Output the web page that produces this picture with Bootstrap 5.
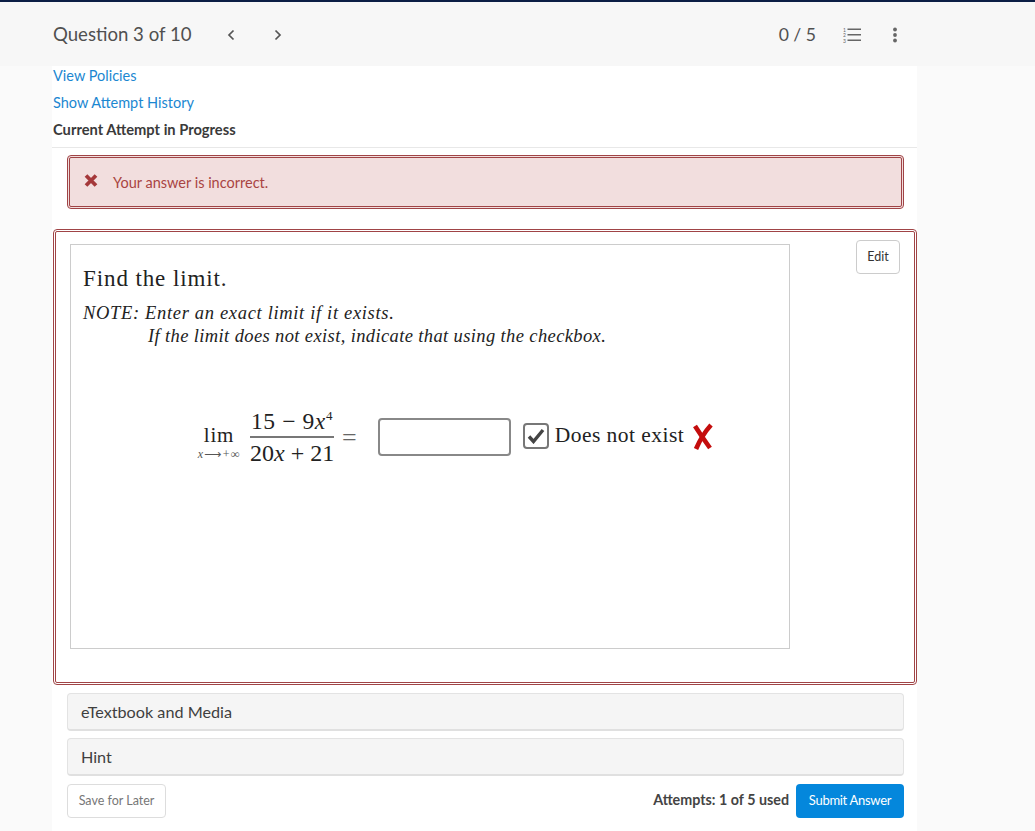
<!DOCTYPE html>
<html lang="en"><head><meta charset="utf-8"><title>Question 3 of 10</title>
<link rel="stylesheet" href="https://cdn.jsdelivr.net/npm/bootstrap@5.3.0/dist/css/bootstrap.min.css">
<style>
html,body{height:831px;overflow:hidden}
body{background:#fafafa;font-family:Lato,"Liberation Sans",sans-serif;color:#333;border-top:2px solid #0c1e45;font-size:14.5px}
.qhead{height:64px;background:#f7f7f7;padding:2px 137px 0 53px;color:#505050}
.qtitle{font-size:18.6px;width:173px}
.qscore{font-size:17.6px;margin-right:27px}
.qnav{margin-right:37px;line-height:0}
.qlist{margin-right:31px}
.qlist text{font:5px Lato,sans-serif;fill:#666}
.qmain{width:865px;margin-left:52px;background:#fff;height:765px}
.qlinks{padding:0 1px;height:82px;border-bottom:1px solid #e8e8e8}
.qlinks>*{height:27px;line-height:20px;display:block}
.qlinks a{color:#1b87d1;text-decoration:none}
.qlinks strong{color:#3a3a3a;font-weight:700;font-size:14.7px;line-height:19px}
.wrong-alert{margin:7px 13px 0 15px;height:54px;border:3px double #a04446;border-radius:4px;background:#f2dede;color:#a94442;padding-left:14px;gap:15px}
.wrong-alert svg{margin-bottom:4px}
.wrong-alert span{padding-top:2px}
.wrong-box{margin:20px 0 0 1px;height:456px;border:3px double #a04446;border-radius:4px;padding:12px 14px 0 14px;gap:66px}
.qfigure{width:720px;height:405px;flex-shrink:0;border:1px solid #ccc;padding:20px 12px 0 12px;font-family:"Liberation Serif",serif;color:#222}
.qfind{font-size:23px;letter-spacing:.9px;line-height:28px}
.qnote{font-size:18.5px;font-style:italic;letter-spacing:.67px;line-height:24px;margin-top:8px}
.qnote2{padding-left:65px;letter-spacing:.38px;margin-top:-1px}
.qmath{margin-top:61px;margin-left:107px;height:56px}
.qlim{width:58px;text-align:center;margin-top:11px}
.qlim b{font-weight:400;font-size:21px;line-height:20px;display:block;letter-spacing:.8px}
.qlim i{font-size:12px;line-height:12px;display:block;white-space:nowrap;margin-top:3px;font-family:"Liberation Serif","DejaVu Sans",serif;letter-spacing:.8px;color:#555}
.qfrac{width:84px;margin-left:2px;font-size:23.5px;line-height:30px;text-align:center;white-space:nowrap}
.qfrac>div:first-child{border-bottom:2px solid #777;height:32px;letter-spacing:.6px}
.qdenom{font-size:24px}
.qfrac sup{font-size:13px;top:-.7em}
.qeq{font-size:26px;margin:0 21px 0 8px;color:#666}
.qinput{width:133px;height:38px;border:2px solid #888;border-radius:4px;background:#fff}
.qcheck{width:26px;height:26px;border:2px solid #777;border-radius:4px;margin-left:12px;margin-bottom:2px;line-height:0}
.qdne{font-size:21.5px;letter-spacing:.47px;margin:0 8px 4px 6px;white-space:nowrap}
.edit-btn{height:34px;width:44px;padding:0;font-size:12.5px;color:#333;border:1px solid #ccc;border-radius:4px;background:#fff;margin-top:-4px;flex-shrink:0}
.qpanel{margin:8px 13px 0 15px;height:38px;background:#f5f5f5;border:1px solid #e3e3e3;border-bottom:2px solid #e0e0e0;border-radius:4px;padding:2px 0 0 13px;font-size:16.2px;color:#3f3f3f}
.qpanel+.qpanel{margin-top:7px}
.qfoot{margin:8px 13px 0 15px}
.save-btn{width:99px;height:34px;padding:0;font-size:12.5px;color:#777;background:#fff;border:1px solid #ddd;border-radius:4px}
.qused{font-size:14.3px;font-weight:700;color:#444;margin-right:7px;margin-bottom:2px}
.submit-btn{width:108px;height:34px;padding:0;font-size:13px;background:#0487dc;border:0;color:#fff;border-radius:4px;letter-spacing:-.3px}
</style></head>
<body>
<header class="qhead d-flex align-items-center">
  <div class="qtitle">Question 3 of 10</div>
  <div class="qnav"><svg width="10" height="14" viewBox="0 0 10 14" fill="none" stroke="#555" stroke-width="1.7"><path d="M7.5 2.5 3 7l4.5 4.5"/></svg></div>
  <div class="qnav"><svg width="10" height="14" viewBox="0 0 10 14" fill="none" stroke="#555" stroke-width="1.7"><path d="M2.5 2.5 7 7l-4.5 4.5"/></svg></div>
  <div class="ms-auto qscore">0 / 5</div>
  <svg class="qlist" width="18" height="16" viewBox="0 0 18 16" fill="#666"><rect x="4.5" y="1.5" width="13.5" height="1.5"/><rect x="4.5" y="7" width="13.5" height="1.5"/><rect x="4.5" y="12.5" width="13.5" height="1.5"/><text x="0" y="4.5">1</text><text x="0" y="10">2</text><text x="0" y="15.5">3</text></svg>
  <svg width="6" height="16" viewBox="0 0 6 16" fill="#666"><circle cx="3" cy="2.5" r="1.9"/><circle cx="3" cy="8" r="1.9"/><circle cx="3" cy="13.5" r="1.9"/></svg>
</header>
<main class="qmain">
  <div class="qlinks">
    <a href="#">View Policies</a>
    <a href="#">Show Attempt History</a>
    <strong>Current Attempt in Progress</strong>
  </div>
  <div class="wrong-alert d-flex align-items-center">
    <svg width="14" height="13" viewBox="0 0 14 13" fill="none" stroke="#a5383a" stroke-width="3.8"><path d="M2 1.5l10 10M12 1.5l-10 10"/></svg>
    <span>Your answer is incorrect.</span>
  </div>
  <div class="wrong-box d-flex align-items-start">
    <div class="qfigure">
      <div class="qfind">Find the limit.</div>
      <div class="qnote">NOTE: Enter an exact limit if it exists.</div>
      <div class="qnote qnote2">If the limit does not exist, indicate that using the checkbox.</div>
      <div class="qmath d-flex align-items-center">
        <div class="qlim"><b>lim</b><i>x⟶+∞</i></div>
        <div class="qfrac"><div>15 − 9<i>x</i><sup>4</sup></div><div class="qdenom">20<i>x</i> + 21</div></div>
        <div class="qeq">=</div>
        <div class="qinput"></div>
        <div class="qcheck d-flex align-items-center justify-content-center"><svg width="18" height="16" viewBox="0 0 18 16" fill="none" stroke="#444" stroke-width="3.4"><path d="M2 8.5l4.5 5L16 2"/></svg></div>
        <div class="qdne">Does not exist</div>
        <svg width="21" height="28" viewBox="0 0 21 28" fill="none" stroke="#c40d0d" stroke-width="4.6"><path d="M19 2 Q10 12 4 26"/><path d="M3 3 Q10 14 18 25"/></svg>
      </div>
    </div>
    <button class="btn edit-btn" type="button">Edit</button>
  </div>
  <div class="qpanel d-flex align-items-center">eTextbook and Media</div>
  <div class="qpanel d-flex align-items-center">Hint</div>
  <div class="qfoot d-flex align-items-center">
    <button class="btn save-btn" type="button">Save for Later</button>
    <span class="qused ms-auto">Attempts: 1 of 5 used</span>
    <button class="btn submit-btn" type="button">Submit Answer</button>
  </div>
</main>
<script src="https://cdn.jsdelivr.net/npm/bootstrap@5.3.0/dist/js/bootstrap.bundle.min.js"></script>
</body></html>
